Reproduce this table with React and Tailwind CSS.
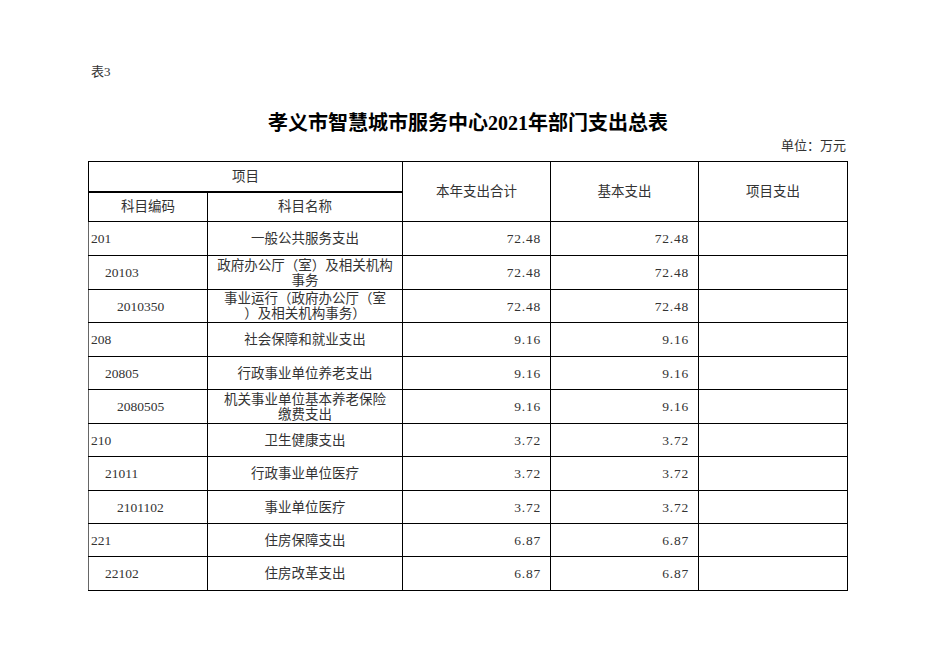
import React from "react";

const rows = [
  { code: "201", lvl: 0, name: ["一般公共服务支出"], a: "72.48", b: "72.48", h: "h-[34px]" },
  { code: "20103", lvl: 1, name: ["政府办公厅（室）及相关机构", "事务"], a: "72.48", b: "72.48", h: "h-[34px]" },
  { code: "2010350", lvl: 2, name: ["事业运行（政府办公厅（室", "）及相关机构事务）"], a: "72.48", b: "72.48", h: "h-[33px]" },
  { code: "208", lvl: 0, name: ["社会保障和就业支出"], a: "9.16", b: "9.16", h: "h-[34px]" },
  { code: "20805", lvl: 1, name: ["行政事业单位养老支出"], a: "9.16", b: "9.16", h: "h-[33px]" },
  { code: "2080505", lvl: 2, name: ["机关事业单位基本养老保险", "缴费支出"], a: "9.16", b: "9.16", h: "h-[34px]" },
  { code: "210", lvl: 0, name: ["卫生健康支出"], a: "3.72", b: "3.72", h: "h-[33px]" },
  { code: "21011", lvl: 1, name: ["行政事业单位医疗"], a: "3.72", b: "3.72", h: "h-[34px]" },
  { code: "2101102", lvl: 2, name: ["事业单位医疗"], a: "3.72", b: "3.72", h: "h-[33px]" },
  { code: "221", lvl: 0, name: ["住房保障支出"], a: "6.87", b: "6.87", h: "h-[33px]" },
  { code: "22102", lvl: 1, name: ["住房改革支出"], a: "6.87", b: "6.87", h: "h-[34px]" },
];

const pad = ["pl-[2px]", "pl-[16px]", "pl-[28px]"];

export default function App() {
  return (
    <div
      className="w-[936px] h-[662px] bg-white text-[#333] overflow-hidden"
      style={{ fontFamily: '"Liberation Serif", "Noto Sans CJK SC", serif' }}
    >
      <div className="pt-[64px] pl-[91px] text-[13px] leading-[16px]">表3</div>
      <div className="mt-[31px] text-center text-[20px] leading-[24px] font-bold text-black">
        孝义市智慧城市服务中心2021年部门支出总表
      </div>
      <div className="mt-[3px] w-[846px] text-right text-[13px] leading-[16px]">单位：万元</div>
      <table className="mt-[7px] ml-[88px] w-[759px] table-fixed border-collapse text-[13.5px] leading-[15px]">
        <colgroup>
          <col className="w-[119px]" />
          <col className="w-[195px]" />
          <col className="w-[148px]" />
          <col className="w-[148px]" />
          <col className="w-[149px]" />
        </colgroup>
        <tbody>
          <tr className="h-[30px]">
            <td colSpan={2} className="border border-black border-b-2 text-center align-middle p-0">
              项目
            </td>
            <td rowSpan={2} className="border border-black text-center align-middle p-0">
              本年支出合计
            </td>
            <td rowSpan={2} className="border border-black text-center align-middle p-0">
              基本支出
            </td>
            <td rowSpan={2} className="border border-black text-center align-middle p-0">
              项目支出
            </td>
          </tr>
          <tr className="h-[30px]">
            <td className="border border-black text-center align-middle p-0">科目编码</td>
            <td className="border border-black text-center align-middle p-0">科目名称</td>
          </tr>
          {rows.map((r) => (
            <tr key={r.code} className={r.h}>
              <td className={`border border-black border-l-[#666] align-middle p-0 ${pad[r.lvl]}`}>
                {r.code}
              </td>
              <td className="border border-black text-center align-middle p-0 whitespace-nowrap">
                {r.name.map((n, i) => (
                  <div key={i}>{n}</div>
                ))}
              </td>
              <td className="border border-black text-right align-middle p-0 pr-[9px] tracking-[0.8px]">
                {r.a}
              </td>
              <td className="border border-black text-right align-middle p-0 pr-[9px] tracking-[0.8px]">
                {r.b}
              </td>
              <td className="border border-black align-middle p-0"></td>
            </tr>
          ))}
        </tbody>
      </table>
    </div>
  );
}
